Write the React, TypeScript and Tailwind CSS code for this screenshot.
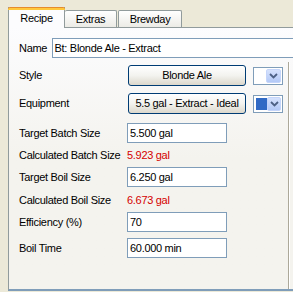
import React from "react";

const font = { fontFamily: '"Liberation Sans", Arial, sans-serif' };

function Chevron() {
  return (
    <svg width="9" height="6" viewBox="0 0 9 6">
      <path d="M1 1 L4.5 4.5 L8 1" fill="none" stroke="#4d6185" strokeWidth="1.8" />
    </svg>
  );
}

function Combo({ swatch }: { swatch?: boolean }) {
  return (
    <div className="w-[30px] h-[18px] border border-[#7f9db9] bg-white flex items-stretch p-px">
      <div className="flex-1 flex items-stretch">
        {swatch && <div className="w-[11px] bg-[#316ac5] ml-px my-px" />}
      </div>
      <div className="w-[15px] rounded-[2px] bg-gradient-to-b from-[#d6e2fd] to-[#b3c9f7] border border-[#c5d5fa] flex items-center justify-center">
        <Chevron />
      </div>
    </div>
  );
}

function XPButton({ children }: { children: React.ReactNode }) {
  return (
    <div className="w-[118px] h-[21px] rounded-[3px] border border-[#003c74] bg-gradient-to-b from-[#ffffff] via-[#f3f3ef] to-[#dcd8cc] flex items-center justify-center text-[11px] text-black whitespace-nowrap">
      {children}
    </div>
  );
}

function Input({ value }: { value: string }) {
  return (
    <div className="w-[100px] h-[20px] border border-[#7f9db9] bg-white flex items-center pl-[2px] text-[11px] text-black">
      {value}
    </div>
  );
}

function Row({ label, mt, h, children }: { label: string; mt: string; h: string; children: React.ReactNode }) {
  return (
    <div className={`flex items-center ${mt} ${h}`}>
      <div className="w-[108px] text-[11px] text-black whitespace-nowrap">{label}</div>
      {children}
    </div>
  );
}

export default function App() {
  return (
    <div className="w-[293px] h-[292px] bg-[#ece9d8] overflow-hidden relative tracking-[-0.3px]" style={font}>
      {/* Tabs */}
      <div className="flex items-end h-[27px] pl-[8px]">
        <div className="relative w-[57px] bg-[#fcfcfe] border-l border-r border-[#919b9c] flex items-center justify-center text-[11px] text-black z-10 -mb-px h-[21px]">
          <div className="absolute left-[-1px] right-[-1px] top-0 h-[3px] rounded-t-[2px] bg-[#ffc83c] border-t border-[#e68b2c]" />
          <span className="mt-[1px]">Recipe</span>
        </div>
        <div className="w-[52px] h-[17px] rounded-t-[2px] border-t border-r border-[#919b9c] bg-gradient-to-b from-[#ffffff] to-[#ecebe6] flex items-center justify-center text-[11px] text-black">
          Extras
        </div>
        <div className="ml-px w-[64px] h-[17px] rounded-t-[2px] border-t border-l border-r border-[#919b9c] bg-gradient-to-b from-[#ffffff] to-[#ecebe6] flex items-center justify-center text-[11px] text-black">
          Brewday
        </div>
      </div>
      {/* Pane */}
      <div className="ml-[8px] w-[300px] h-[264px] border-l border-t border-b-2 border-[#919b9c] border-b-[#7f9db9] bg-gradient-to-b from-[#fcfcfe] via-[#f4f3ee] to-[#f4f3ee] relative">
        <div className="absolute left-[279px] top-[34px] bottom-0 w-px bg-[#aca899]" />
        <div className="absolute left-[280px] top-[34px] bottom-0 w-px bg-white" />
        <div className="pl-[10px] flex flex-col">
          <div className="flex items-center mt-[10px] h-[20px]">
            <div className="w-[33px] text-[11px] text-black">Name</div>
            <div className="w-[260px] h-[20px] border border-[#7f9db9] bg-white flex items-center pl-[2px] text-[11px] text-black whitespace-nowrap">
              Bt: Blonde Ale - Extract
            </div>
          </div>
          <Row label="Style" mt="mt-[7px]" h="h-[21px]">
            <div className="ml-px flex items-center">
              <XPButton>Blonde Ale</XPButton>
              <div className="ml-[7px]"><Combo /></div>
            </div>
          </Row>
          <Row label="Equipment" mt="mt-[7px]" h="h-[21px]">
            <div className="ml-px flex items-center">
              <XPButton>5.5 gal - Extract - Ideal</XPButton>
              <div className="ml-[7px]"><Combo swatch /></div>
            </div>
          </Row>
          <Row label="Target Batch Size" mt="mt-[9px]" h="h-[20px]">
            <Input value="5.500 gal" />
          </Row>
          <Row label="Calculated Batch Size" mt="mt-[2px]" h="h-[20px]">
            <span className="text-[11px] text-[#d40000]">5.923 gal</span>
          </Row>
          <Row label="Target Boil Size" mt="mt-[2px]" h="h-[20px]">
            <Input value="6.250 gal" />
          </Row>
          <Row label="Calculated Boil Size" mt="mt-[3px]" h="h-[20px]">
            <span className="text-[11px] text-[#d40000]">6.673 gal</span>
          </Row>
          <Row label="Efficiency (%)" mt="mt-[2px]" h="h-[20px]">
            <Input value="70" />
          </Row>
          <Row label="Boil Time" mt="mt-[6px]" h="h-[20px]">
            <Input value="60.000 min" />
          </Row>
        </div>
      </div>
    </div>
  );
}
